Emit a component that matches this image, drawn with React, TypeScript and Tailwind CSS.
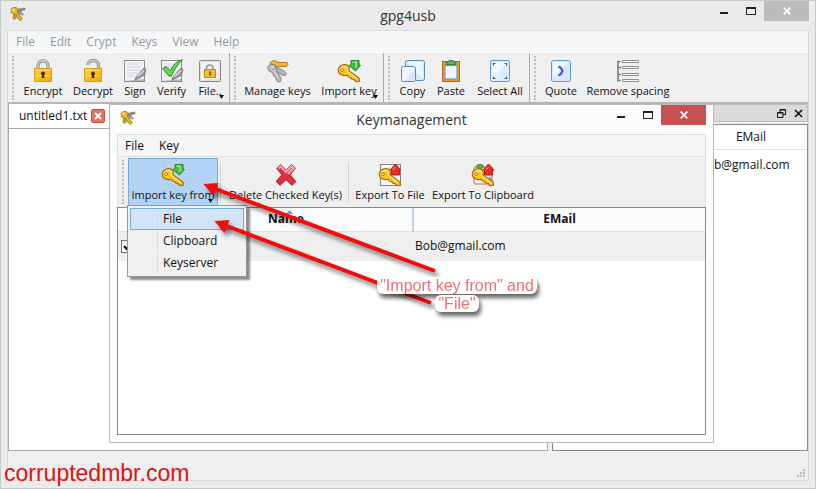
import { useId, type ReactNode } from 'react';

function KeysIcon({ size = 18 }: { size?: number }) {
  return (
    <svg width={size} height={size} viewBox="0 0 18 18" aria-hidden="true">
      <path d="M7.500 4.500 15.500 3l.8 1.500-2 .8-.8-.4-1 1.400-4 1z" fill="#8d8d8d" stroke="#666" strokeWidth=".6" />
      <path d="M8 7l5 .6 1.500 2-1.500 .5-2-1.200-3 .5z" fill="#a8a8a8" stroke="#777" strokeWidth=".6" />
      <path d="M2 4.500 4 2.500l3.500 0 1.500 2-.5 3 4.500 5.500-.5 2-2 .2-1-1.800-1.200-.4-.6-2-2-1.500L2.500 8z" fill="#e2b823" stroke="#9b7a12" strokeWidth=".8" />
      <path d="M5 9 3.800 13l1.400 1.500 1.600-1 .8-3.500z" fill="#cfa41c" stroke="#8f7115" strokeWidth=".7" />
      <circle cx="4.500" cy="5" r="1.100" fill="#fbf6df" />
    </svg>
  );
}

function LockIcon({ open = false }: { open?: boolean }) {
  const id = useId();
  return (
    <svg width="22" height="24" viewBox="0 0 22 24" aria-hidden="true">
      <defs>
        <linearGradient id={id} x1="0" y1="0" x2="1" y2="1">
          <stop offset="0" stopColor="#ffd83e" />
          <stop offset=".4" stopColor="#fdc21c" />
          <stop offset="1" stopColor="#f6a50b" />
        </linearGradient>
      </defs>
      <path d={open ? 'M6 6C6 0 17 0 16.500 7L16.500 10' : 'M6 10V7C6 .2 16 .2 16 7V10'} fill="none" stroke="#85878e" strokeWidth="3.200" />
      <path d={open ? 'M6 6C6 0 17 0 16.500 7L16.500 10' : 'M6 10V7C6 .2 16 .2 16 7V10'} fill="none" stroke="#cccdd5" strokeWidth="1.600" />
      <rect x="2.500" y="9.500" width="17" height="13" fill={`url(#${id})`} stroke="#dc9c22" />
      <path d="M3 11.500h16M3 17h16" stroke="#ffe777" strokeWidth="1" opacity=".7" />
      <circle cx="11" cy="14.500" r="2" fill="#4e2407" />
      <path d="M10.300 15h1.500l.7 4h-3z" fill="#4e2407" />
    </svg>
  );
}

function SignIcon({ check = false }: { check?: boolean }) {
  return (
    <svg width="24" height="24" viewBox="0 0 24 24" aria-hidden="true">
      <rect x="1.500" y="1.500" width="20" height="21" fill="#f3f2f8" stroke="#8c8c8c" />
      <path d="M4 5h15M4 8h15M4 11h14M4 14h11M4 17h8" stroke="#d3d0e4" />
      <path d="M2 22 21 20v2z" fill="#b5b5b5" />
      <path d="M21 9l2 1.500-1.500 5.500-7 4-2.500 1 1-3z" fill="#999" stroke="#707070" strokeWidth=".8" />
      <path d="M21 11.500l-6.500 6" stroke="#dedede" strokeWidth="1.500" />
      {check && <path d="M2.500 9.500 6 7.500l4.500 4.500C13 6 17 2 22.500 .8 17 5.500 14 11 11.500 17H9z" fill="#67d852" stroke="#218a25" strokeWidth="1" />}
    </svg>
  );
}

function FileLockIcon() {
  return (
    <svg width="24" height="24" viewBox="0 0 24 24" aria-hidden="true">
      <rect x="1.500" y="1.500" width="21" height="21" rx="1" fill="#dedede" stroke="#898989" />
      <path d="M3 3h18v17L3 21z" fill="#f3f3f3" />
      <path d="M8.500 11V9c0-4 6.500-4 6.500 0v2" fill="none" stroke="#94969a" strokeWidth="1.600" />
      <rect x="6.500" y="10.500" width="11" height="8" fill="#f7bd26" stroke="#bf8b25" />
      <path d="M12 12.500v4" stroke="#643c0c" strokeWidth="1.600" />
    </svg>
  );
}

function GoldKey() {
  return (
    <g>
      <path
        d="M1.200 11.500C1 8.500 4 5.800 7.500 5.700 10.500 5.600 12.200 7.500 12.300 10l-.2 2 9.900 7 .5 3.200-3.700 .5-1.800-2.200-2.200-.3-1.300-1.900-2.100-.3-1.400-1.800C6.500 17.300 1.500 15.500 1.200 11.500z"
        fill="#fbc51c"
        stroke="#ae6b0c"
        strokeWidth="1.200"
        strokeLinejoin="round"
      />
      <path d="M3 10.500C4 8 6.500 7 8.500 7.500c1.500 .5 2.200 2 2 5L20.500 20" fill="none" stroke="#ffe675" strokeWidth="1.300" />
      <circle cx="5" cy="11" r="1.400" fill="#fff8e0" stroke="#99620e" strokeWidth=".8" />
    </g>
  );
}

function ImportIcon() {
  return (
    <svg width="24" height="24" viewBox="0 0 24 24" aria-hidden="true">
      <GoldKey />
      <path d="M14 1.500h8V6l1.500 .5L18.500 12 12 6.500 14 6z" fill="#42bd48" stroke="#238431" strokeLinejoin="round" />
      <path d="M15.500 3h3.500v5.500" fill="none" stroke="#9be598" strokeWidth="1.600" />
    </svg>
  );
}

function ExportIcon({ clipboard = false }: { clipboard?: boolean }) {
  return (
    <svg width="24" height="24" viewBox="0 0 24 24" aria-hidden="true">
      {clipboard ? (
        <g>
          <rect x="3" y="4" width="18" height="17" rx="2" fill="#e7f0fb" stroke="#e49a54" strokeWidth="1.500" />
          <path d="m18 14 3 3-4 4" fill="none" stroke="#7da8df" strokeWidth="2" />
          <ellipse cx="9" cy="3.500" rx="3.500" ry="2" fill="#42b963" stroke="#2d8d4a" />
        </g>
      ) : (
        <rect x="2.500" y="1.500" width="20" height="21" fill="#f6f6f6" stroke="#858585" />
      )}
      <GoldKey />
      <path d="M17.500 1 23 7h-1.500v5h-8V7H12z" fill="#ee2b1e" stroke="#a92018" strokeLinejoin="round" />
      <path d="m15 7 2.500-3" stroke="#ff9b86" />
    </svg>
  );
}

function ManageIcon() {
  return (
    <svg width="24" height="24" viewBox="0 0 24 24" aria-hidden="true">
      <path d="M4 3.500 8 1.500l5 2h8l1 2-1.500 2h-8l-3 1.500-4-2z" fill="#f2b929" stroke="#b27a24" />
      <path d="M11 8l7 4 2.500 3-1.500 1.500-3-.5-6-4z" fill="#b3b4bb" stroke="#85868d" />
      <path d="M1.500 8 4 5.500l4 0 3 3-.3 4 4.300 6.500-.5 3.500-2.500 .5-1.500-2-1-3-2-1-.5-3-4-2z" fill="#b7b8c0" stroke="#85868e" />
      <path d="M5 7.500 8.500 9l-.5 3 4 7" fill="none" stroke="#e3e3e8" />
      <path d="M9 5.500c1.500 2 1 4-2 5" fill="none" stroke="#777" />
    </svg>
  );
}

function CopyIcon() {
  return (
    <svg width="26" height="24" viewBox="0 0 26 24" aria-hidden="true">
      <rect x="5.500" y="1.500" width="19" height="20" rx="2" fill="#d6e9fb" stroke="#568bc1" />
      <path d="M7 3h16v17z" fill="#edf6ff" />
      <rect x="1.500" y="7.500" width="14" height="15" rx="2" fill="#eef7ff" stroke="#568bc1" />
      <path d="M15 9v13H5z" fill="#d1e8fb" />
    </svg>
  );
}

function PasteIcon() {
  return (
    <svg width="22" height="24" viewBox="0 0 22 24" aria-hidden="true">
      <rect x="2.500" y="2.500" width="17" height="20" fill="#e69a31" stroke="#b7651b" />
      <path d="M5 6.500h12V20H5z" fill="#edf5ff" stroke="#6c93bd" />
      <path d="M15 20l2-3v3z" fill="#97b5db" />
      <path d="M6 5.500V3.500h2L9 1.500h4l1 2h2v2z" fill="#4db961" stroke="#2b8245" />
    </svg>
  );
}

function SelectAllIcon() {
  return (
    <svg width="22" height="24" viewBox="0 0 22 24" aria-hidden="true">
      <rect x="1.500" y="1.500" width="19" height="21" rx="2" fill="#dceefe" stroke="#5d97cf" />
      <path d="M3 3h15L3 20z" fill="#f3faff" />
      <path d="M4.500 6.500v-2h2M15.500 4.500h2v2M4.500 17.500v2h2M15.500 19.500h2v-2" fill="none" stroke="#31557e" strokeWidth="1.200" />
    </svg>
  );
}

function QuoteIcon() {
  return (
    <svg width="22" height="24" viewBox="0 0 22 24" aria-hidden="true">
      <rect x="1.500" y="1.500" width="19" height="21" rx="2" fill="#d3eafe" stroke="#5d97cf" />
      <path d="M3 3h15L3 18z" fill="#eef8ff" />
      <path d="m8.500 7.500 2.500 1.500 1.500 3-1.500 3-2.500 1.500" fill="none" stroke="#594fcd" strokeWidth="2.200" />
    </svg>
  );
}

function SpacingIcon() {
  return (
    <svg width="24" height="24" viewBox="0 0 24 24" aria-hidden="true">
      <path d="M4.500 2.500H2v19h2.500M2 8.500h3M2 15.500h3" fill="none" stroke="#70777a" strokeWidth="1.500" />
      <path d="M6.500 1.500h16v2h-16zM6.500 7.500h16v2h-16zM6.500 14.500h16v2h-16zM6.500 20.500h16v2h-16z" fill="#fafafa" stroke="#8b9092" />
    </svg>
  );
}

function DeleteIcon() {
  return (
    <svg width="24" height="24" viewBox="0 0 24 24" aria-hidden="true">
      <path d="M3 5.500 6.500 2l5.500 5.500L17.500 2 21 5.500 16 12l5.500 6.500L18 22l-6-5.500L6 22l-3.500-3.500L8 12z" fill="#e0303f" stroke="#b3303c" strokeWidth="1.200" strokeLinejoin="round" />
      <path d="M4.500 5.500 6.500 3.500 12 9l5.500-5.500 2 2L14 11" fill="none" stroke="#f6aab0" strokeWidth="2" />
    </svg>
  );
}

function ToolButton({ icon, label, width, menu, active }: { icon: ReactNode; label: string; width: string; menu?: boolean; active?: boolean }) {
  return (
    <button
      type="button"
      className={`${width} relative flex h-12 shrink-0 flex-col items-center border pt-1 text-[11px] leading-[16px] whitespace-nowrap ${active ? 'border-[#78aadd] bg-[#b3d3f4]' : 'border-transparent'}`}
    >
      {icon}
      <span>{label}</span>
      {menu && (
        <svg className="absolute right-1 bottom-0.5" width="5" height="4" viewBox="0 0 5 4" aria-hidden="true">
          <path d="M0 0h5L2.500 4z" fill="#111" />
        </svg>
      )}
    </button>
  );
}

function Handle() {
  return <span className="mx-1 h-11 w-0 shrink-0 border-l-2 border-dotted border-[#bdbdbd]" />;
}

function ToolGroup({ children, last }: { children: ReactNode; last?: boolean }) {
  return (
    <div className={`flex h-[50px] items-center ${last ? '' : 'border-r border-[#a9a9a9]'}`}>
      <Handle />
      {children}
    </div>
  );
}

function WindowButtons({ closeClass }: { closeClass: string }) {
  return (
    <div className="flex h-5">
      <button type="button" aria-label="Minimize" className="flex w-[27px] items-center justify-center pt-1">
        <span className="h-0.5 w-2 bg-[#222]" />
      </button>
      <button type="button" aria-label="Maximize" className="flex w-[27px] items-center justify-center">
        <span className="h-2 w-2.5 border border-t-2 border-[#222]" />
      </button>
      <button type="button" aria-label="Close" className={`flex w-[45px] items-center justify-center ${closeClass}`}>
        <svg width="8" height="8" viewBox="0 0 8 8" aria-hidden="true">
          <path d="m.7.7 6.600 6.600m0-6.600L.7 7.300" stroke="#fff" strokeWidth="1.700" />
        </svg>
      </button>
    </div>
  );
}

function TitleBar({ title, closeClass }: { title: string; closeClass: string }) {
  return (
    <header className="grid h-[29px] shrink-0 grid-cols-[1fr_auto_1fr]">
      <div className="pt-1 pl-0.5">
        <KeysIcon />
      </div>
      <h1 className="text-[14px] leading-[29px] text-[#333]">{title}</h1>
      <div className="flex justify-end">
        <WindowButtons closeClass={closeClass} />
      </div>
    </header>
  );
}

function KeyDialog() {
  return (
    <section role="dialog" aria-label="Keymanagement" className="absolute top-[103px] left-[108px] flex h-[339px] w-[605px] flex-col border border-[#b9b9b9] bg-[#fcfcfc] px-[7px] pb-[7px]">
      <TitleBar title="Keymanagement" closeClass="bg-[#c75050]" />
      <nav className="flex h-[22px] shrink-0 items-center gap-[15px] border border-b-0 border-[#dcdcdc] bg-[#f5f6f7] px-[7px] text-[12px]">
        <button type="button">File</button>
        <button type="button">Key</button>
      </nav>
      <div className="flex h-[51px] shrink-0 items-center border-x border-t border-[#e1e1e1] bg-[#efefef]">
        <Handle />
        <ToolButton icon={<ImportIcon />} label="Import key from" width="w-[90px]" menu active />
        <span className="mx-0.5 h-10 w-px bg-[#d2d2d2]" />
        <ToolButton icon={<DeleteIcon />} label="Delete Checked Key(s)" width="w-[125px]" />
        <span className="h-10 w-px bg-[#d2d2d2]" />
        <ToolButton icon={<ExportIcon />} label="Export To File" width="w-[82px]" />
        <ToolButton icon={<ExportIcon clipboard />} label="Export To Clipboard" width="w-[104px]" />
      </div>
      <div className="min-h-0 flex-1 border border-[#858994] bg-white">
        <table className="w-full table-fixed border-collapse text-[12px]">
          <colgroup>
            <col className="w-[42px]" />
            <col className="w-[253px]" />
            <col />
          </colgroup>
          <thead>
            <tr className="h-[23px] bg-[#f9fbfd]">
              <th className="border-b border-[#d8e3ef] p-0" />
              <th className="relative border-r-2 border-b border-[#c3d2e2] border-b-[#d8e3ef] p-0">
                <svg className="absolute top-0.5 left-1/2" width="7" height="4" viewBox="0 0 7 4" aria-hidden="true">
                  <path d="M0 4 3.500 0 7 4z" fill="#6d9bc4" />
                </svg>
                Name
              </th>
              <th className="border-b border-[#d8e3ef] p-0">EMail</th>
            </tr>
          </thead>
          <tbody>
            <tr className="h-[30px] bg-[#efefef]">
              <td className="p-0 pl-[3px]">
                <span className="grid size-[13px]">
                  <input type="checkbox" defaultChecked aria-label="Select key" className="col-start-1 row-start-1 size-[13px] appearance-none border border-[#707070] bg-white" />
                  <svg className="pointer-events-none col-start-1 row-start-1" width="13" height="13" viewBox="0 0 13 13" aria-hidden="true">
                    <path d="m3 6 2.500 3L10 3.500" fill="none" stroke="#111" strokeWidth="2" />
                  </svg>
                </span>
              </td>
              <td className="p-0" />
              <td className="p-0 pl-0.5">Bob@gmail.com</td>
            </tr>
          </tbody>
        </table>
      </div>
    </section>
  );
}

function ImportMenu() {
  return (
    <div role="menu" className="absolute top-[204px] left-[126px] w-[120px] border border-[#979797] bg-[#f1f1f1] p-0.5 text-[12px] leading-5 shadow-[3px_3px_2px_rgba(0,0,0,0.45)]">
      {['File', 'Clipboard', 'Keyserver'].map((item, index) => (
        <button
          key={item}
          type="button"
          role="menuitem"
          className={`flex h-[22px] w-full items-center border ${index === 0 ? 'border-[#78aadd] bg-[#d2e4f5]' : 'border-transparent'}`}
        >
          <span className="h-5 w-[27px] shrink-0 border-r border-[#dadada]" />
          <span className="pl-[5px]">{item}</span>
        </button>
      ))}
    </div>
  );
}

function Arrows() {
  return (
    <svg className="pointer-events-none absolute top-0 left-0 drop-shadow-[3px_4px_2px_rgba(0,0,0,0.5)]" width="480" height="330" viewBox="0 0 480 330" aria-hidden="true">
      <path d="M434 270 212 187M430 302 223 224" stroke="#f40b0b" strokeWidth="4" />
      <path d="M202.500 183 217.500 182 212.500 195zM213.500 220 228.500 219 223.500 232z" fill="#f40b0b" />
    </svg>
  );
}

export default function App() {
  return (
    <main className="relative flex h-screen flex-col overflow-hidden border border-[#c9c9c9] bg-[#ebebeb] px-1.5 pb-[7px] font-['Open_Sans','Noto_Sans',sans-serif] text-[#111]">
      <TitleBar title="gpg4usb" closeClass="bg-[#bcbcbc]" />
      <div className="flex min-h-0 flex-1 flex-col border border-[#dadada] bg-[#efefef]">
        <nav className="flex h-[21px] shrink-0 items-center gap-[15px] bg-[#f5f6f7] px-2 text-[12px] text-[#999]">
          {['File', 'Edit', 'Crypt', 'Keys', 'View', 'Help'].map((item) => (
            <button key={item} type="button">{item}</button>
          ))}
        </nav>
        <div className="flex h-[52px] shrink-0 border-t border-b-2 border-t-white border-b-[#b5b5b5]">
          <ToolGroup>
            <ToolButton icon={<LockIcon />} label="Encrypt" width="w-[50px]" />
            <ToolButton icon={<LockIcon open />} label="Decrypt" width="w-[50px]" />
            <ToolButton icon={<SignIcon />} label="Sign" width="w-[34px]" />
            <ToolButton icon={<SignIcon check />} label="Verify" width="w-[39px]" />
            <ToolButton icon={<FileLockIcon />} label="File.." width="w-[38px]" menu />
          </ToolGroup>
          <ToolGroup>
            <ToolButton icon={<ManageIcon />} label="Manage keys" width="w-[75px]" />
            <ToolButton icon={<ImportIcon />} label="Import key" width="w-[68px]" menu />
          </ToolGroup>
          <ToolGroup>
            <ToolButton icon={<CopyIcon />} label="Copy" width="w-[37px]" />
            <ToolButton icon={<PasteIcon />} label="Paste" width="w-[40px]" />
            <ToolButton icon={<SelectAllIcon />} label="Select All" width="w-[58px]" />
          </ToolGroup>
          <ToolGroup last>
            <ToolButton icon={<QuoteIcon />} label="Quote" width="w-[42px]" />
            <ToolButton icon={<SpacingIcon />} label="Remove spacing" width="w-[92px]" />
          </ToolGroup>
        </div>
        <div className="flex min-h-0 flex-1 gap-1">
          <section className="flex min-w-0 flex-1 flex-col">
            <div className="flex h-6 shrink-0 items-center gap-1 border-l border-[#a8a8a8] bg-white pl-2.5 text-[12px]">
              <span>untitled1.txt</span>
              <button type="button" aria-label="Close tab" className="flex size-3.5 items-center justify-center rounded-xs border border-[#c8513b] bg-[#e2735c]">
                <svg width="8" height="8" viewBox="0 0 8 8" aria-hidden="true">
                  <path d="m1 1 6 6m0-6L1 7" stroke="#fff" strokeWidth="2" />
                </svg>
              </button>
            </div>
            <textarea aria-label="Message" className="min-h-0 flex-1 resize-none border border-[#a8a8a8] bg-white" />
          </section>
          <aside className="flex w-[256px] shrink-0 flex-col">
            <div className="flex h-[18px] shrink-0 items-center justify-end gap-2 border border-[#c0c0c0] bg-[#dadada] px-1">
              <button type="button" aria-label="Float panel">
                <svg className="block" width="9" height="9" viewBox="0 0 9 9" aria-hidden="true">
                  <path d="M3 3V.5h5.500V5.500H6M3 1h5.500M.5 3.500H6v5H.5zM.5 4H6" fill="none" stroke="#111" />
                </svg>
              </button>
              <button type="button" aria-label="Close panel">
                <svg className="block" width="9" height="9" viewBox="0 0 9 9" aria-hidden="true">
                  <path d="m1 1 7 7m0-7L1 8" stroke="#111" strokeWidth="1.600" />
                </svg>
              </button>
            </div>
            <div className="mt-0.5 min-h-0 flex-1 border border-[#858994] bg-white">
              <table className="w-full table-fixed border-collapse text-[12px]">
                <colgroup>
                  <col />
                  <col className="w-[112px]" />
                </colgroup>
                <thead>
                  <tr className="h-6 border-b border-[#d8e3ef]">
                    <th className="p-0" />
                    <th className="p-0 font-normal">EMail</th>
                  </tr>
                </thead>
                <tbody>
                  <tr className="h-[31px]">
                    <td className="p-0" />
                    <td className="p-0 pl-1">Bob@gmail.com</td>
                  </tr>
                </tbody>
              </table>
            </div>
          </aside>
        </div>
        <footer className="flex h-[29px] shrink-0 items-end justify-end p-0.5">
          <svg width="9" height="9" viewBox="0 0 9 9" aria-hidden="true">
            <path d="M6 0h2v2H6zM3 3h2v2H3zM6 3h2v2H6zM0 6h2v2H0zM3 6h2v2H3zM6 6h2v2H6z" fill="#bbb" />
          </svg>
        </footer>
      </div>
      <KeyDialog />
      <ImportMenu />
      <Arrows />
      <p className="absolute top-[276px] left-[368px] w-[176px] text-center font-['Liberation_Sans',sans-serif] text-[16px] leading-[18px] text-[#ee6f6f] drop-shadow-[2px_4px_2px_rgba(0,0,0,0.6)]">
        <span className="rounded-md bg-white box-decoration-clone px-[3px]">"Import key from" and "File"</span>
      </p>
      <p className="absolute bottom-0 left-[3px] font-['Liberation_Sans',sans-serif] text-[23px] leading-[30px] text-[#dc1414]">corruptedmbr.com</p>
    </main>
  );
}
